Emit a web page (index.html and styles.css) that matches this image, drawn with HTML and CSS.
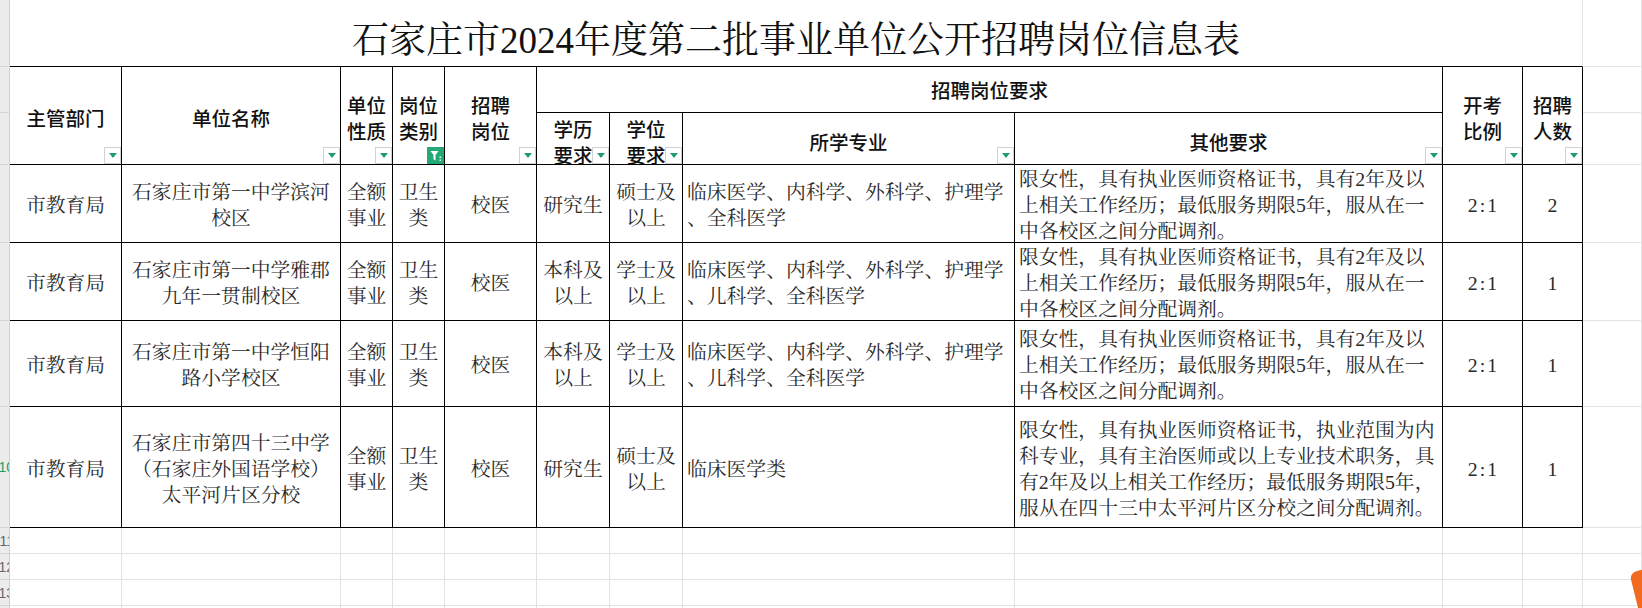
FILE: index.html
```html
<!DOCTYPE html>
<html lang="zh-CN">
<head>
<meta charset="utf-8">
<title>石家庄市2024年度第二批事业单位公开招聘岗位信息表</title>
<link rel="stylesheet" href="styles.css">
</head>
<body>
<div class="sheet">
  <!-- row 1: title -->
  <div class="rh"></div>
  <div class="title">石家庄市2024年度第二批事业单位公开招聘岗位信息表</div>
  <div class="g"></div>

  <!-- row 2: header -->
  <div class="rh"></div>
  <div class="th r2"><span>主管部门</span><i class="dd"></i></div>
  <div class="th r2"><span>单位名称</span><i class="dd"></i></div>
  <div class="th r2"><span>单位<br>性质</span><i class="dd"></i></div>
  <div class="th r2"><span>岗位<br>类别</span><i class="dd on"><svg viewBox="0 0 17 17" width="17" height="17"><path d="M3.5 4h8l-3 4v5.5l-2-1.2V8z" fill="#fff"/><rect x="12.5" y="9.5" width="1.6" height="1.4" fill="#fff"/><rect x="12.5" y="12.5" width="1.6" height="1.4" fill="#fff"/></svg></i></div>
  <div class="th r2"><span>招聘<br>岗位</span><i class="dd"></i></div>
  <div class="th c4 top"><span>招聘岗位要求</span></div>
  <div class="th r2"><span>开考<br>比例</span><i class="dd"></i></div>
  <div class="th r2"><span>招聘<br>人数</span><i class="dd"></i></div>
  <div class="g"></div>

  <!-- row 3: sub header -->
  <div class="rh"></div>
  <div class="th sub"><span>学历<br>要求</span><i class="dd"></i></div>
  <div class="th sub"><span>学位<br>要求</span><i class="dd"></i></div>
  <div class="th sub"><span>所学专业</span><i class="dd"></i></div>
  <div class="th sub"><span>其他要求</span><i class="dd"></i></div>
  <div class="g"></div>

  <!-- data row 1 -->
  <div class="rh"></div>
  <div class="td"><span>市教育局</span></div>
  <div class="td"><span>石家庄市第一中学滨河<br>校区</span></div>
  <div class="td"><span>全额<br>事业</span></div>
  <div class="td"><span>卫生<br>类</span></div>
  <div class="td"><span>校医</span></div>
  <div class="td"><span>研究生</span></div>
  <div class="td"><span>硕士及<br>以上</span></div>
  <div class="td l"><span>临床医学、内科学、外科学、护理学<br>、全科医学</span></div>
  <div class="td l"><span>限女性，具有执业医师资格证书，具有2年及以<br>上相关工作经历；最低服务期限5年，服从在一<br>中各校区之间分配调剂。</span></div>
  <div class="td"><span class="ratio">2:1</span></div>
  <div class="td"><span>2</span></div>
  <div class="g"></div>

  <!-- data row 2 -->
  <div class="rh"></div>
  <div class="td"><span>市教育局</span></div>
  <div class="td"><span>石家庄市第一中学雅郡<br>九年一贯制校区</span></div>
  <div class="td"><span>全额<br>事业</span></div>
  <div class="td"><span>卫生<br>类</span></div>
  <div class="td"><span>校医</span></div>
  <div class="td"><span>本科及<br>以上</span></div>
  <div class="td"><span>学士及<br>以上</span></div>
  <div class="td l"><span>临床医学、内科学、外科学、护理学<br>、儿科学、全科医学</span></div>
  <div class="td l"><span>限女性，具有执业医师资格证书，具有2年及以<br>上相关工作经历；最低服务期限5年，服从在一<br>中各校区之间分配调剂。</span></div>
  <div class="td"><span class="ratio">2:1</span></div>
  <div class="td"><span>1</span></div>
  <div class="g"></div>

  <!-- data row 3 -->
  <div class="rh"></div>
  <div class="td"><span>市教育局</span></div>
  <div class="td"><span>石家庄市第一中学恒阳<br>路小学校区</span></div>
  <div class="td"><span>全额<br>事业</span></div>
  <div class="td"><span>卫生<br>类</span></div>
  <div class="td"><span>校医</span></div>
  <div class="td"><span>本科及<br>以上</span></div>
  <div class="td"><span>学士及<br>以上</span></div>
  <div class="td l"><span>临床医学、内科学、外科学、护理学<br>、儿科学、全科医学</span></div>
  <div class="td l"><span>限女性，具有执业医师资格证书，具有2年及以<br>上相关工作经历；最低服务期限5年，服从在一<br>中各校区之间分配调剂。</span></div>
  <div class="td"><span class="ratio">2:1</span></div>
  <div class="td"><span>1</span></div>
  <div class="g"></div>

  <!-- data row 4 -->
  <div class="rh"><b class="sel">10</b></div>
  <div class="td"><span>市教育局</span></div>
  <div class="td"><span>石家庄市第四十三中学<br>（石家庄外国语学校）<br>太平河片区分校</span></div>
  <div class="td"><span>全额<br>事业</span></div>
  <div class="td"><span>卫生<br>类</span></div>
  <div class="td"><span>校医</span></div>
  <div class="td"><span>研究生</span></div>
  <div class="td"><span>硕士及<br>以上</span></div>
  <div class="td l"><span>临床医学类</span></div>
  <div class="td l"><span>限女性，具有执业医师资格证书，执业范围为内<br>科专业，具有主治医师或以上专业技术职务，具<br>有2年及以上相关工作经历；最低服务期限5年，<br>服从在四十三中太平河片区分校之间分配调剂。</span></div>
  <div class="td"><span class="ratio">2:1</span></div>
  <div class="td"><span>1</span></div>
  <div class="g"></div>

  <!-- blank rows -->
  <div class="rh"><b>11</b></div>
  <div class="g"></div><div class="g"></div><div class="g"></div><div class="g"></div><div class="g"></div><div class="g"></div><div class="g"></div><div class="g"></div><div class="g"></div><div class="g"></div><div class="g"></div><div class="g"></div>

  <div class="rh"><b>12</b></div>
  <div class="g"></div><div class="g"></div><div class="g"></div><div class="g"></div><div class="g"></div><div class="g"></div><div class="g"></div><div class="g"></div><div class="g"></div><div class="g"></div><div class="g"></div><div class="g"></div>

  <div class="rh"><b>13</b></div>
  <div class="g"></div><div class="g"></div><div class="g"></div><div class="g"></div><div class="g"></div><div class="g"></div><div class="g"></div><div class="g"></div><div class="g"></div><div class="g"></div><div class="g"></div><div class="g"></div>

  <div class="rh"><b>14</b></div>
  <div class="g"></div><div class="g"></div><div class="g"></div><div class="g"></div><div class="g"></div><div class="g"></div><div class="g"></div><div class="g"></div><div class="g"></div><div class="g"></div><div class="g"></div><div class="g"></div>
</div>
<div class="fab"></div>
</body>
</html>
```

FILE: styles.css
```css
html, body {
  margin: 0;
  padding: 0;
  background: #fff;
  overflow: hidden;
}

body {
  width: 1642px;
  height: 608px;
  position: relative;
}

.sheet {
  display: grid;
  grid-template-columns: 10px 112px 219px 52px 52px 92px 73px 73px 332px 428px 80px 60px 1fr;
  grid-template-rows: 67px 46px 52px 78px 78px 86px 121px 26px 26px 26px 26px;
  height: 608px;
  overflow: hidden;
}

.sheet > div {
  box-sizing: border-box;
  min-width: 0;
}

/* row header strip at the far left */
.rh {
  background: #ececec;
  border-right: 1px solid #d0d0d0;
  border-bottom: 1px solid #d6d6d6;
  overflow: hidden;
  display: flex;
  align-items: center;
  justify-content: flex-end;
}

.rh b {
  font-family: "Liberation Sans", "Noto Sans", sans-serif;
  font-weight: 400;
  font-size: 14px;
  color: #666;
  margin-right: -5px;
  white-space: nowrap;
}

.rh b.sel {
  color: #1f9e63;
}

/* plain spreadsheet grid cells */
.g {
  border-right: 1px solid #e2e2e2;
  border-bottom: 1px solid #e2e2e2;
}

/* title */
.title {
  grid-column: span 11;
  border-bottom: 1px solid #000;
  border-right: 1px solid #e2e2e2;
  display: flex;
  align-items: center;
  justify-content: center;
  padding-top: 8px;
  font-family: "Liberation Serif", "Noto Serif CJK SC", "Noto Sans CJK SC", serif;
  font-size: 37px;
  color: #111;
  white-space: nowrap;
}

/* header cells */
.th {
  position: relative;
  border-right: 1px solid #000;
  border-bottom: 1px solid #000;
  display: flex;
  align-items: center;
  justify-content: center;
  text-align: center;
  padding-top: 4px;
  font-family: "Noto Sans CJK SC", "Noto Sans", sans-serif;
  font-weight: 500;
  font-size: 19.5px;
  line-height: 26px;
  color: #111;
  white-space: nowrap;
}

.th.r2 {
  grid-row: span 2;
}

.th.c4 {
  grid-column: span 4;
}

.th.top {
  padding-top: 0;
}

.th.sub {
  padding-top: 6px;
}

/* filter dropdown buttons */
.dd {
  position: absolute;
  right: 0;
  bottom: 0;
  width: 17px;
  height: 17px;
  box-sizing: border-box;
  border: 1px solid #d2d2d2;
  background: #fff;
  display: flex;
  align-items: center;
  justify-content: center;
}

.dd::after {
  content: "";
  width: 0;
  height: 0;
  border-left: 4px solid transparent;
  border-right: 4px solid transparent;
  border-top: 5px solid #1f9e6b;
}

.dd.on {
  background: #24a874;
  border-color: #24a874;
}

.dd.on::after {
  display: none;
}

.dd.on svg {
  display: block;
  flex: none;
}

/* data cells */
.td {
  border-right: 1px solid #000;
  border-bottom: 1px solid #000;
  display: flex;
  align-items: center;
  justify-content: center;
  text-align: center;
  padding-top: 3px;
  font-family: "Liberation Serif", "Noto Serif CJK SC", "Noto Sans CJK SC", serif;
  font-size: 19.8px;
  line-height: 26px;
  color: #2a2a2a;
  white-space: nowrap;
}

.td.l {
  justify-content: flex-start;
  text-align: left;
  padding-left: 4px;
}

.ratio {
  letter-spacing: 2px;
  padding-left: 2px;
}

/* floating orange widget at bottom-right */
.fab {
  position: absolute;
  left: 1634px;
  top: 569px;
  width: 28px;
  height: 42px;
  background: #f26a1f;
  border-radius: 7px;
  transform: rotate(-14deg);
}
```
